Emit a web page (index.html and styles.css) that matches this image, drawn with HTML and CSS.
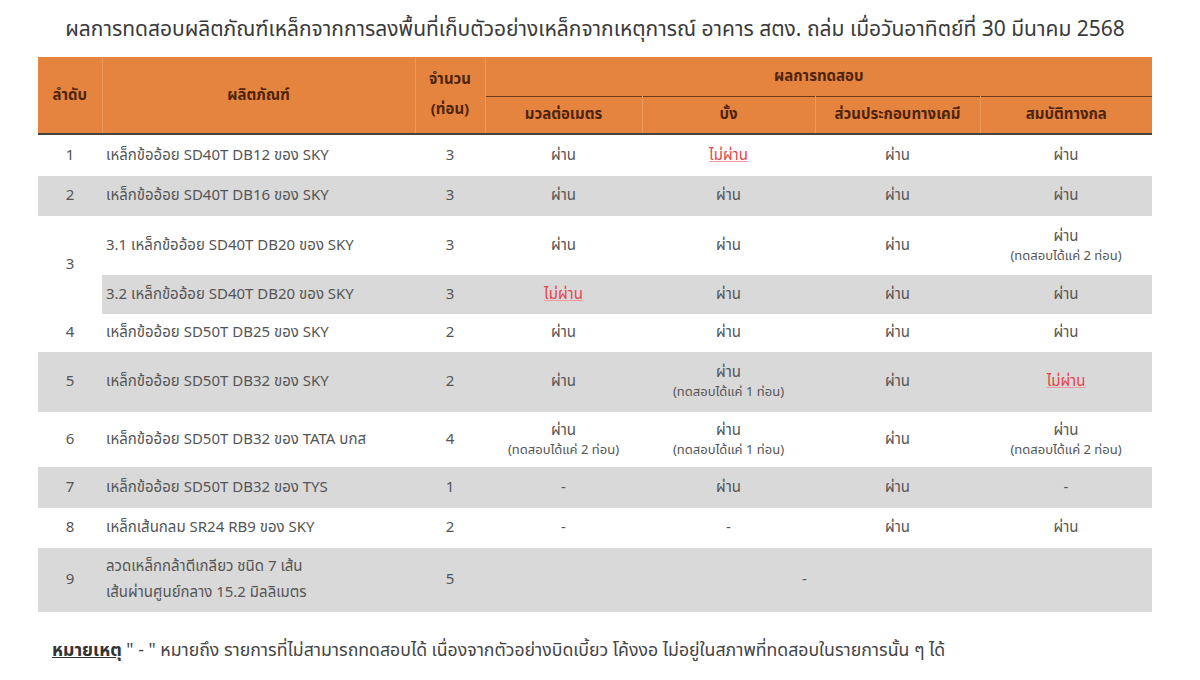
FILE: index.html
```html
<!DOCTYPE html>
<html lang="th">
<head>
<meta charset="utf-8">
<link rel="stylesheet" href="styles.css">
</head>
<body>
<div class="page">
  <h1 class="title">ผลการทดสอบผลิตภัณฑ์เหล็กจากการลงพื้นที่เก็บตัวอย่างเหล็กจากเหตุการณ์ อาคาร สตง. ถล่ม เมื่อวันอาทิตย์ที่ 30 มีนาคม 2568</h1>
  <table class="results">
    <colgroup>
      <col class="c-no"><col class="c-prod"><col class="c-qty"><col class="c-r1"><col class="c-r2"><col class="c-r3"><col class="c-r4">
    </colgroup>
    <thead>
      <tr class="h1">
        <th rowspan="2" class="sep">ลำดับ</th>
        <th rowspan="2" class="sep">ผลิตภัณฑ์</th>
        <th rowspan="2" class="qtyh sep"><span>จำนวน</span><span>(ท่อน)</span></th>
        <th colspan="4" class="group">ผลการทดสอบ</th>
      </tr>
      <tr class="h2">
        <th class="sep">มวลต่อเมตร</th>
        <th class="sep">บั้ง</th>
        <th class="sep">ส่วนประกอบทางเคมี</th>
        <th>สมบัติทางกล</th>
      </tr>
    </thead>
    <tbody>
      <tr class="r1">
        <td>1</td><td class="prod">เหล็กข้ออ้อย SD40T DB12 ของ SKY</td><td>3</td>
        <td>ผ่าน</td><td><span class="fail">ไม่ผ่าน</span></td><td>ผ่าน</td><td>ผ่าน</td>
      </tr>
      <tr class="r2 grey">
        <td>2</td><td class="prod">เหล็กข้ออ้อย SD40T DB16 ของ SKY</td><td>3</td>
        <td>ผ่าน</td><td>ผ่าน</td><td>ผ่าน</td><td>ผ่าน</td>
      </tr>
      <tr class="r3a">
        <td rowspan="2" class="white">3</td><td class="prod">3.1 เหล็กข้ออ้อย SD40T DB20 ของ SKY</td><td>3</td>
        <td>ผ่าน</td><td>ผ่าน</td><td>ผ่าน</td><td><div>ผ่าน</div><div class="note">(ทดสอบได้แค่ 2 ท่อน)</div></td>
      </tr>
      <tr class="r3b grey">
        <td class="prod">3.2 เหล็กข้ออ้อย SD40T DB20 ของ SKY</td><td>3</td>
        <td><span class="fail">ไม่ผ่าน</span></td><td>ผ่าน</td><td>ผ่าน</td><td>ผ่าน</td>
      </tr>
      <tr class="r4">
        <td>4</td><td class="prod">เหล็กข้ออ้อย SD50T DB25 ของ SKY</td><td>2</td>
        <td>ผ่าน</td><td>ผ่าน</td><td>ผ่าน</td><td>ผ่าน</td>
      </tr>
      <tr class="r5 grey">
        <td>5</td><td class="prod">เหล็กข้ออ้อย SD50T DB32 ของ SKY</td><td>2</td>
        <td>ผ่าน</td><td><div>ผ่าน</div><div class="note">(ทดสอบได้แค่ 1 ท่อน)</div></td><td>ผ่าน</td><td><span class="fail">ไม่ผ่าน</span></td>
      </tr>
      <tr class="r6">
        <td>6</td><td class="prod">เหล็กข้ออ้อย SD50T DB32 ของ TATA บกส</td><td>4</td>
        <td><div>ผ่าน</div><div class="note">(ทดสอบได้แค่ 2 ท่อน)</div></td><td><div>ผ่าน</div><div class="note">(ทดสอบได้แค่ 1 ท่อน)</div></td><td>ผ่าน</td><td><div>ผ่าน</div><div class="note">(ทดสอบได้แค่ 2 ท่อน)</div></td>
      </tr>
      <tr class="r7 grey">
        <td>7</td><td class="prod">เหล็กข้ออ้อย SD50T DB32 ของ TYS</td><td>1</td>
        <td>-</td><td>ผ่าน</td><td>ผ่าน</td><td>-</td>
      </tr>
      <tr class="r8">
        <td>8</td><td class="prod">เหล็กเส้นกลม SR24 RB9 ของ SKY</td><td>2</td>
        <td>-</td><td>-</td><td>ผ่าน</td><td>ผ่าน</td>
      </tr>
      <tr class="r9 grey">
        <td>9</td><td class="prod">ลวดเหล็กกล้าตีเกลียว ชนิด 7 เส้น<br>เส้นผ่านศูนย์กลาง 15.2 มิลลิเมตร</td><td>5</td>
        <td colspan="4" class="dash">-</td>
      </tr>
    </tbody>
  </table>
  <p class="footnote"><span class="fn-label">หมายเหตุ</span> " - " หมายถึง รายการที่ไม่สามารถทดสอบได้ เนื่องจากตัวอย่างบิดเบี้ยว โค้งงอ ไม่อยู่ในสภาพที่ทดสอบในรายการนั้น ๆ ได้</p>
</div>
</body>
</html>
```

FILE: styles.css
```css
html, body {
  margin: 0;
  padding: 0;
  background: #ffffff;
}

body {
  font-family: "Tahoma", "Noto Sans Thai", "Noto Sans", "DejaVu Sans", sans-serif;
  color: #555555;
}

.page {
  width: 1200px;
  height: 680px;
  padding: 16px 0 0 38px;
  box-sizing: border-box;
}

.title {
  width: 1114px;
  margin: 0 0 13px 0;
  font-size: 21px;
  font-weight: normal;
  color: #3a3a3a;
  text-align: center;
  line-height: 28px;
}

.results {
  width: 1114px;
  border-collapse: collapse;
  table-layout: fixed;
  font-size: 15px;
}

.c-no { width: 64px; }
.c-prod { width: 313px; }
.c-qty { width: 70px; }
.c-r1 { width: 157px; }
.c-r2 { width: 173px; }
.c-r3 { width: 165px; }
.c-r4 { width: 172px; }

thead th {
  background: #e5843f;
  color: #4e230c;
  font-weight: bold;
  font-size: 15px;
  padding: 0;
  text-align: center;
}

thead th.sep {
  border-right: 1px solid #eb9a5e;
}

.h1 { height: 39px; }
.h2 { height: 38px; }

.h2 th {
  border-top: 1px solid #6b3a1c;
  border-bottom: 2px solid #444444;
}

.h1 th[rowspan] {
  border-bottom: 2px solid #444444;
}

.qtyh span {
  display: block;
  line-height: 30px;
}

tbody td {
  padding: 0;
  text-align: center;
  vertical-align: middle;
  line-height: 20px;
}

tbody td.prod {
  text-align: left;
  padding-left: 4px;
}

tbody tr.grey td {
  background: #d9d9d9;
}

tbody td.white {
  background: #ffffff;
}

.r1 { height: 42px; }
.r2 { height: 40px; }
.r3a { height: 59px; }
.r3b { height: 39px; }
.r4 { height: 38px; }
.r5 { height: 60px; }
.r6 { height: 55px; }
.r7 { height: 41px; }
.r8 { height: 40px; }
.r9 { height: 64px; }

.r9 .prod {
  line-height: 26px;
}

.note {
  font-size: 13px;
  line-height: 18px;
}

.fail {
  color: #e2454a;
  text-decoration: underline;
  text-decoration-color: #f09a9c;
}

.dash {
  padding-right: 28px;
}

.footnote {
  margin: 25px 0 0 14px;
  font-size: 17.7px;
  color: #444444;
}

.fn-label {
  font-weight: bold;
  text-decoration: underline;
  color: #333333;
}
```
